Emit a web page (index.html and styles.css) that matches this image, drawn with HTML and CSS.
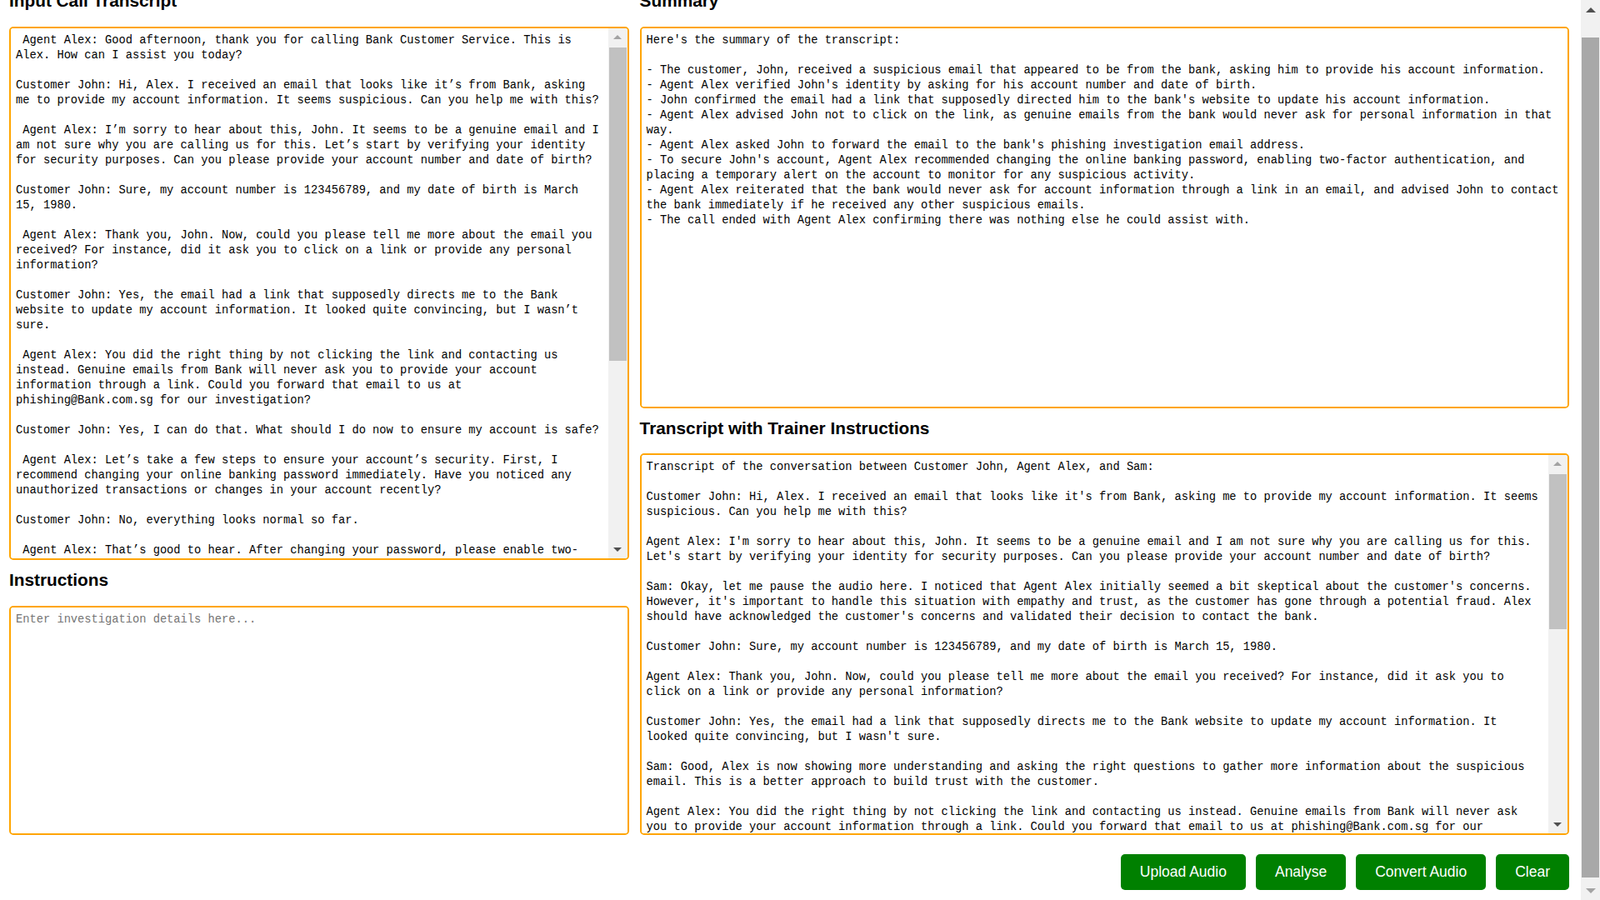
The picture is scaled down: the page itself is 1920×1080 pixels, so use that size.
FILE: index.html
```html
<!DOCTYPE html>
<html lang="en">
<head>
<meta charset="utf-8">
<title>Call Transcript Analyser</title>
<link rel="stylesheet" href="styles.css">
</head>
<body>
<div class="app">
<div class="viewport" id="viewport">
<main class="page">
  <div class="cols">
    <section class="col">
      <h2 class="heading">Input Call Transcript</h2>
      <div class="field field-input">
        <textarea class="box" spellcheck="false"> Agent Alex: Good afternoon, thank you for calling Bank Customer Service. This is Alex. How can I assist you today?

Customer John: Hi, Alex. I received an email that looks like it’s from Bank, asking me to provide my account information. It seems suspicious. Can you help me with this?

 Agent Alex: I’m sorry to hear about this, John. It seems to be a genuine email and I am not sure why you are calling us for this. Let’s start by verifying your identity for security purposes. Can you please provide your account number and date of birth?

Customer John: Sure, my account number is 123456789, and my date of birth is March 15, 1980.

 Agent Alex: Thank you, John. Now, could you please tell me more about the email you received? For instance, did it ask you to click on a link or provide any personal information?

Customer John: Yes, the email had a link that supposedly directs me to the Bank website to update my account information. It looked quite convincing, but I wasn’t sure.

 Agent Alex: You did the right thing by not clicking the link and contacting us instead. Genuine emails from Bank will never ask you to provide your account information through a link. Could you forward that email to us at phishing@Bank.com.sg for our investigation?

Customer John: Yes, I can do that. What should I do now to ensure my account is safe?

 Agent Alex: Let’s take a few steps to ensure your account’s security. First, I recommend changing your online banking password immediately. Have you noticed any unauthorized transactions or changes in your account recently?

Customer John: No, everything looks normal so far.

 Agent Alex: That’s good to hear. After changing your password, please enable two-factor authentication for an added layer of security. This will help protect your account from unauthorized access.

Customer John: Okay, I’ll do that right away. Is there anything else I should do?

 Agent Alex: Yes, I would also recommend placing a temporary alert on your account so that we can monitor it for any suspicious activity. Would you like me to do that for you?

Customer John: Yes, please. That would be great.

 Agent Alex: I’ve placed the alert on your account. Please remember that Bank will never ask for your account information through a link in an email. If you receive any other suspicious emails, please contact us immediately.

Customer John: Thank you, Alex. I appreciate your help.

 Agent Alex: You’re welcome, John. Is there anything else I can assist you with today?

Customer John: No, that’s all. Thank you.

 Agent Alex: Thank you for calling Bank Customer Service. Have a great day!</textarea>
        <div class="sbar" aria-hidden="true">
          <div class="sbar-btn"><span class="arrow-up arrow-off"></span></div>
          <div class="sbar-track"><div class="sbar-thumb" style="height: 376px"></div></div>
          <div class="sbar-btn"><span class="arrow-down"></span></div>
        </div>
      </div>
      <h2 class="heading">Instructions</h2>
      <div class="field field-instr">
        <textarea class="box" placeholder="Enter investigation details here..."></textarea>
      </div>
    </section>
    <section class="col">
      <h2 class="heading">Summary</h2>
      <div class="field field-summary">
        <textarea class="box" spellcheck="false">Here's the summary of the transcript:

- The customer, John, received a suspicious email that appeared to be from the bank, asking him to provide his account information.
- Agent Alex verified John's identity by asking for his account number and date of birth.
- John confirmed the email had a link that supposedly directed him to the bank's website to update his account information.
- Agent Alex advised John not to click on the link, as genuine emails from the bank would never ask for personal information in that way.
- Agent Alex asked John to forward the email to the bank's phishing investigation email address.
- To secure John's account, Agent Alex recommended changing the online banking password, enabling two-factor authentication, and placing a temporary alert on the account to monitor for any suspicious activity.
- Agent Alex reiterated that the bank would never ask for account information through a link in an email, and advised John to contact the bank immediately if he received any other suspicious emails.
- The call ended with Agent Alex confirming there was nothing else he could assist with.</textarea>
      </div>
      <h2 class="heading heading-tight">Transcript with Trainer Instructions</h2>
      <div class="field field-trainer">
        <textarea class="box" spellcheck="false">Transcript of the conversation between Customer John, Agent Alex, and Sam:

Customer John: Hi, Alex. I received an email that looks like it's from Bank, asking me to provide my account information. It seems suspicious. Can you help me with this?

Agent Alex: I'm sorry to hear about this, John. It seems to be a genuine email and I am not sure why you are calling us for this. Let's start by verifying your identity for security purposes. Can you please provide your account number and date of birth?

Sam: Okay, let me pause the audio here. I noticed that Agent Alex initially seemed a bit skeptical about the customer's concerns. However, it's important to handle this situation with empathy and trust, as the customer has gone through a potential fraud. Alex should have acknowledged the customer's concerns and validated their decision to contact the bank.

Customer John: Sure, my account number is 123456789, and my date of birth is March 15, 1980.

Agent Alex: Thank you, John. Now, could you please tell me more about the email you received? For instance, did it ask you to click on a link or provide any personal information?

Customer John: Yes, the email had a link that supposedly directs me to the Bank website to update my account information. It looked quite convincing, but I wasn't sure.

Sam: Good, Alex is now showing more understanding and asking the right questions to gather more information about the suspicious email. This is a better approach to build trust with the customer.

Agent Alex: You did the right thing by not clicking the link and contacting us instead. Genuine emails from Bank will never ask you to provide your account information through a link. Could you forward that email to us at phishing@Bank.com.sg for our investigation?

Sam: Well done, Alex. You reassured the customer and clearly explained the bank's policy. Remember to also thank the customer for being vigilant and reporting the email.

Customer John: Yes, I can do that. What should I do now to ensure my account is safe?

Agent Alex: Let's take a few steps to ensure your account's security. First, I recommend changing your online banking password immediately. Have you noticed any unauthorized transactions or changes in your account recently?

Customer John: No, everything looks normal so far.

Agent Alex: That's good to hear. After changing your password, please enable two-factor authentication for an added layer of security.

Customer John: Okay, I'll do that right away. Thank you for your help.

Agent Alex: You're welcome, John. Is there anything else I can assist you with today?

Customer John: No, that's all. Thank you.

Sam: Overall, Alex handled the call well after the initial hesitation. In future calls, focus on showing empathy from the start and acknowledging the customer's concerns before moving on to verification.</textarea>
        <div class="sbar" aria-hidden="true">
          <div class="sbar-btn"><span class="arrow-up arrow-off"></span></div>
          <div class="sbar-track"><div class="sbar-thumb" style="height: 186px"></div></div>
          <div class="sbar-btn"><span class="arrow-down"></span></div>
        </div>
      </div>
    </section>
  </div>
  <div class="actions">
    <button class="btn" type="button">Upload Audio</button>
    <button class="btn" type="button">Analyse</button>
    <button class="btn" type="button">Convert Audio</button>
    <button class="btn" type="button">Clear</button>
  </div>
</main>
</div>
<div class="page-sbar" aria-hidden="true">
  <div class="page-sbar-btn"><span class="page-arrow-up"></span></div>
  <div class="page-sbar-track"><div class="page-sbar-thumb" style="height: 1008px"></div></div>
  <div class="page-sbar-btn"><span class="page-arrow-down"></span></div>
</div>
</div>
<script src="script.js"></script>
</body>
</html>
```

FILE: styles.css
```css
* {
  box-sizing: border-box;
}

html,
body {
  height: 100%;
  overflow: hidden;
}

body {
  margin: 0;
  background: #ffffff;
  color: #000000;
  font-family: "Liberation Sans", Arial, sans-serif;
}

.app {
  display: flex;
  height: 100vh;
}

.viewport {
  flex: 1;
  min-width: 0;
  overflow-y: auto;
  scrollbar-width: none;
}

.page {
  width: 1897px;
  padding: 7px 14px 12px 11px;
}

.cols {
  display: grid;
  grid-template-columns: 2fr 3fr;
  column-gap: 13px;
}

.col {
  display: flex;
  flex-direction: column;
  min-width: 0;
}

.heading {
  margin: 12px 0 19px;
  font-size: 20.8px;
  line-height: 24px;
  font-weight: bold;
  color: #000000;
}

.heading-tight {
  margin-bottom: 18px;
}

.field {
  display: flex;
  border: 2px solid #ffa500;
  border-radius: 5px;
  background: #ffffff;
  overflow: hidden;
}

.field-input {
  height: 640px;
}

.field-instr {
  height: 275px;
}

.field-summary {
  height: 458px;
}

.field-trainer {
  height: 458px;
}

.box {
  flex: 1;
  min-width: 0;
  height: 100%;
  margin: 0;
  padding: 6px 7px 5px 6px;
  border: none;
  background: #ffffff;
  color: #000000;
  font-family: "Liberation Mono", "DejaVu Sans Mono", monospace;
  font-size: 13.73px;
  line-height: 18px;
  resize: none;
  outline: none;
  overflow: hidden;
}

.box::placeholder {
  color: #757575;
}

/* textarea scrollbar */
.sbar {
  flex: none;
  width: 23px;
  display: flex;
  flex-direction: column;
  background: #f1f1f1;
}

.sbar-btn {
  flex: none;
  height: 21px;
  display: flex;
  align-items: center;
  justify-content: center;
}

.sbar-track {
  flex: 1;
  padding: 2px 1px 0;
}

.sbar-thumb {
  background: #c1c1c1;
}

.arrow-up,
.arrow-down {
  width: 0;
  height: 0;
  border-left: 5px solid transparent;
  border-right: 5px solid transparent;
}

.arrow-up {
  border-bottom: 5px solid #505050;
}

.arrow-down {
  border-top: 5px solid #505050;
}

.arrow-up.arrow-off {
  border-bottom-color: #a3a3a3;
}

/* page scrollbar */
.page-sbar {
  flex: none;
  width: 23px;
  height: 100%;
  display: flex;
  flex-direction: column;
  background: #f1f1f1;
}

.page-sbar-btn {
  flex: none;
  height: 23px;
  display: flex;
  align-items: center;
  justify-content: center;
}

.page-sbar-track {
  flex: 1;
  padding: 22px 1px 0;
}

.page-sbar-thumb {
  background: #a8a8a8;
}

.page-arrow-up,
.page-arrow-down {
  width: 0;
  height: 0;
  border-left: 6px solid transparent;
  border-right: 6px solid transparent;
}

.page-arrow-up {
  border-bottom: 6px solid #505050;
}

.page-arrow-down {
  border-top: 6px solid #a3a3a3;
}

/* buttons */
.actions {
  display: flex;
  justify-content: flex-end;
  gap: 12px;
  margin-top: 23px;
}

.btn {
  height: 43px;
  padding: 0 23px;
  border: none;
  border-radius: 5px;
  background: #008000;
  color: #ffffff;
  font-family: "Liberation Sans", Arial, sans-serif;
  font-size: 17.5px;
  cursor: pointer;
}
```

FILE: script.js
```js
function scrollToEnd() {
  var vp = document.getElementById('viewport');
  vp.scrollTop = vp.scrollHeight;
}
scrollToEnd();
window.addEventListener('load', scrollToEnd);
```
